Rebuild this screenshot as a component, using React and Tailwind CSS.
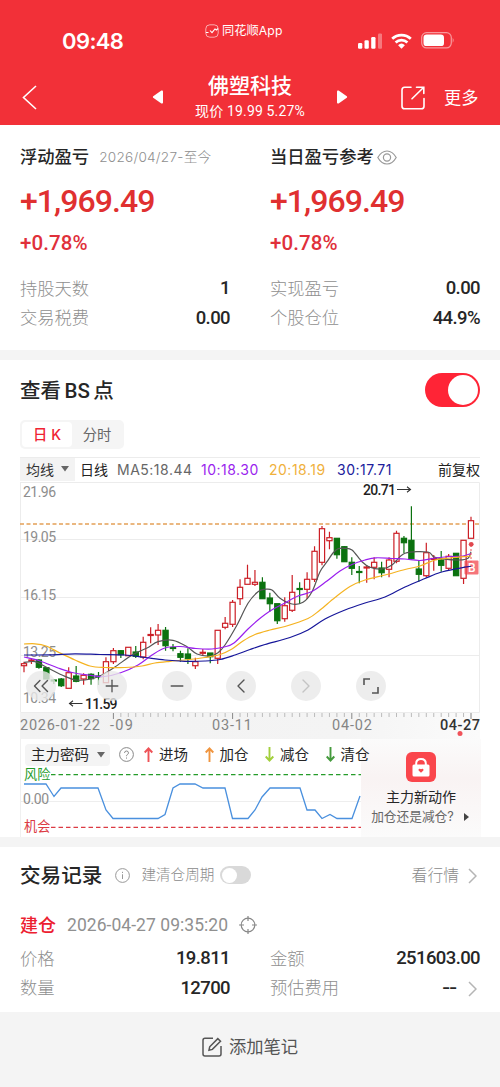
import React, { useState } from 'react';
import { ChevronLeft, ChevronRight, ChevronsLeft, Plus, Minus } from 'lucide-react';

// one entry per trading day: [high, bodyTop, bodyBottom, low, up]
const CANDLES = [
  [661.7, 663.7, 665.7, 672.3, 1], [658, 660, 661, 664, 1], [659.3, 660, 667.3, 668.7, 0],
  [667.7, 667.7, 679, 679, 0], [679, 680, 681, 684, 0], [678, 679, 685.7, 687, 0],
  [667.3, 672.7, 688.3, 688.3, 1], [666, 676, 681.3, 682.3, 0], [673.3, 675.3, 679, 684.7, 1],
  [673.3, 674.3, 678.7, 684.7, 0], [672, 676, 677, 685, 0], [657.3, 661.7, 682.7, 682.7, 1],
  [648, 650.7, 661.7, 664, 1], [650, 650.7, 654.7, 658, 0], [647.3, 647.3, 655.7, 655.7, 1],
  [646, 652, 656.3, 658, 0], [636.7, 642.3, 657, 659.3, 1], [627.3, 634.5, 635.5, 643.3, 1],
  [624, 630.3, 635, 645, 1], [627, 630.3, 645.7, 650.7, 0], [644, 647.5, 648.5, 651.3, 0],
  [650.7, 653.7, 657.3, 661.7, 0], [648.3, 654, 658.7, 664, 0], [657.7, 661.7, 665.7, 669, 1],
  [649, 652.3, 653.3, 655.7, 1], [653, 653, 656.7, 663.3, 0], [630.3, 630.3, 658.3, 664, 1],
  [617, 623.3, 627.3, 629.3, 1], [600, 602.3, 624.3, 627, 1], [579.3, 587.3, 598.7, 605, 1],
  [564.7, 578.3, 584.3, 584.3, 1], [570, 582.3, 584.3, 586, 1], [577.3, 582.3, 598.7, 599, 0],
  [592.7, 598, 603.7, 611.7, 0], [603.7, 603.7, 620.7, 624, 0], [597.3, 605.7, 618.7, 621.7, 1],
  [575, 592.3, 610.3, 612, 1], [582.3, 588.5, 589.5, 603.7, 0], [572.3, 579.3, 589.3, 599, 1],
  [546.3, 551.3, 579.3, 582, 1], [526, 528.7, 562.3, 565.3, 1], [531.7, 537.7, 540.7, 549.3, 1],
  [538, 538.3, 554.7, 558.7, 0], [546, 546.7, 561.7, 562, 0], [557.3, 562.3, 568.3, 575, 0],
  [566, 571.5, 572.5, 583.3, 0], [565, 567, 568, 582.7, 1], [557.3, 562.3, 567.3, 579.3, 1],
  [561.7, 568, 572.7, 577.3, 0], [557.3, 560, 569.3, 577.3, 1], [530.7, 533.3, 561.3, 563.3, 1],
  [536, 538.3, 542.7, 553.3, 0], [506.3, 540.3, 558.7, 559.7, 0], [560, 569, 574.3, 581.7, 0],
  [542.7, 552.7, 575.7, 577.3, 1], [555, 558.5, 559.5, 570.7, 1], [551, 560, 565.3, 571.7, 0],
  [554, 556.3, 568.3, 570, 1], [553, 553.3, 575.7, 576, 0], [540, 540.3, 578.3, 584, 1],
  [516.7, 520.7, 538.3, 538.3, 1],
];

const MA = [
  {
    color: '#555555',
    pts: [[24, 662.5], [35, 661.7], [46, 667], [62, 675], [76, 680], [91, 679], [102, 675], [115, 667], [132, 655], [147, 648], [158, 641.7], [173, 640.3], [187, 646.7], [197, 654], [210, 656], [218, 652.7], [225, 645], [237, 625], [248, 603.3], [258, 591.7], [265, 589.3], [272, 590], [280, 598.3], [292, 604], [303, 602.3], [312, 591.7], [320, 571.7], [327, 561.7], [333, 553], [338, 548.7], [345, 548.3], [352, 550], [362, 561.7], [370, 567.3], [382, 569], [392, 565], [405, 553.3], [428, 552], [435, 557.3], [458, 560], [468, 558.3], [471, 551.7]],
  },
  {
    color: '#9a1fee',
    pts: [[24, 657], [40, 661], [58, 668], [72, 672.5], [88, 675], [104, 676.5], [120, 673], [138, 665], [152, 655], [165, 648], [180, 646.5], [196, 648.5], [212, 649], [224, 647], [234, 643], [248, 629], [258, 620], [270, 611], [283, 604], [298, 596], [312, 591.5], [327, 581], [340, 571], [352, 564.5], [365, 560], [376, 557.8], [392, 558.5], [405, 559], [420, 560.5], [435, 558], [450, 556.5], [463, 556], [471, 553.5]],
  },
  {
    color: '#f5b321',
    pts: [[24, 644], [35, 643.8], [46, 646], [60, 653], [75, 660], [90, 666], [105, 667.5], [125, 667.5], [142, 666], [155, 663], [170, 661.3], [185, 660], [205, 657.5], [220, 654.5], [232, 649], [243, 641], [255, 634.5], [270, 630], [285, 626.5], [308, 618.5], [320, 610], [335, 597.5], [350, 586.5], [365, 580], [385, 575], [405, 569.5], [420, 566], [435, 560], [450, 558], [471, 556]],
  },
  {
    color: '#16169a',
    pts: [[24, 655], [50, 654.8], [75, 653.8], [100, 654.5], [125, 655], [145, 657.5], [165, 660], [185, 661.3], [205, 661], [220, 659.5], [235, 655], [250, 649.5], [265, 644.5], [290, 637.5], [308, 630], [325, 619], [345, 610], [365, 603], [385, 597], [405, 587], [425, 578.5], [440, 572.5], [455, 569], [471, 566.5]],
  },
];

const FORCE = '24,784 46,784 54,796.5 61,788 98,788 106,810 113,818.5 158,818.5 165,814.5 173,788 180,784 195,784 203,788 225,788 232.5,818.5 248,818.5 255,810 262,797 270,788 300,788 307,810 315,810 322,818.5 330,814.5 337,818.5 352,818.5 360,796';

const candleX = (i) => 24 + i * 7.45;

function smooth(pts) {
  let d = `M${pts[0][0]} ${pts[0][1]}`;
  for (let i = 0; i < pts.length - 1; i++) {
    const a = pts[i - 1] || pts[i], b = pts[i], c = pts[i + 1], e = pts[i + 2] || c;
    d += `C${b[0] + (c[0] - a[0]) / 6} ${b[1] + (c[1] - a[1]) / 6} ${c[0] - (e[0] - b[0]) / 6} ${c[1] - (e[1] - b[1]) / 6} ${c[0]} ${c[1]}`;
  }
  return d;
}

const numCls = "font-['Roboto','Noto_Sans_CJK_SC',sans-serif]";

function StatusBar() {
  return (
    <div className="flex h-[64px] items-start text-white">
      <div className="w-[184px] pt-[26px] pl-[62px] text-[22px] leading-[30px] font-semibold tracking-[-0.6px]">09:48</div>
      <div className="flex w-[122px] items-center gap-[3px] pt-[22px] pl-[21px] text-[12.2px] leading-[18px] tracking-[0.1px]">
        <svg width="14" height="14" viewBox="0 0 14 14" fill="none" stroke="white" strokeWidth="1">
          <rect x=".8" y=".8" width="12.4" height="12.4" rx="4" opacity=".6" />
          <path d="M1 8.5H3.5M5 6.5L7 8.7L10 5L11.5 6L13 4.5" strokeWidth="1.1" />
        </svg>
        <span className="whitespace-nowrap">同花顺App</span>
      </div>
      <div className="flex items-center gap-[9px] pt-[32px] pl-[52px]">
        <svg width="24" height="16" viewBox="0 0 24 16" fill="white">
          <rect x="0" y="10" width="4.3" height="5.7" rx="1.2" />
          <rect x="6.5" y="7.2" width="4.3" height="8.5" rx="1.2" />
          <rect x="13.2" y="4" width="4.3" height="11.7" rx="1.2" />
          <rect x="20" y=".5" width="4.2" height="15.2" rx="1.2" opacity=".35" />
        </svg>
        <svg width="21" height="16" viewBox="0 0 21 16" fill="none" stroke="white" strokeWidth="2.7">
          <path d="M1.2 5.8A13.4 13.4 0 0 1 19.8 5.8" />
          <path d="M4.6 9.4A8.6 8.6 0 0 1 16.4 9.4" />
          <path d="M7.1 12.2A5 5 0 0 1 13.9 12.2L10.5 15.7Z" fill="white" stroke="none" />
        </svg>
        <svg width="34" height="17" viewBox="0 0 34 17" fill="none">
          <rect x=".7" y=".7" width="29.6" height="15.2" rx="4.8" stroke="white" strokeOpacity=".5" strokeWidth="1.2" />
          <rect x="2.5" y="2.5" width="20.5" height="11.6" rx="3.2" fill="white" />
          <path d="M31.7 5.8Q33.6 8.3 31.7 10.8Z" fill="white" fillOpacity=".5" />
        </svg>
      </div>
    </div>
  );
}

function Header() {
  return (
    <header className="h-[125px] bg-[#f23038]">
      <StatusBar />
      <div className="flex h-[61px] items-center text-white">
        <svg className="mt-[5px] ml-[22px]" width="16" height="25" viewBox="0 0 16 25" fill="none" stroke="white" strokeWidth="1.6">
          <path d="M14 1L1.5 12.5L14 24" />
        </svg>
        <svg className="mt-[5px] ml-[114px]" width="12" height="14" viewBox="0 0 12 14" fill="white"><path d="M1.2 6.2L9.4 .6Q11 0 11 1.6V12.4Q11 14 9.4 13.4L1.2 7.8Q.4 7 1.2 6.2Z" /></svg>
        <div className="w-[172px] pt-[6px] text-center">
          <div className="text-[21px] leading-[26px] font-medium">佛塑科技</div>
          <div className={`pt-[1px] text-[14px] leading-[22px] tracking-[0.15px] ${numCls}`}>现价 19.99 5.27%</div>
        </div>
        <svg className="mt-[5px]" width="12" height="14" viewBox="0 0 12 14" fill="white"><path d="M10.8 6.2L2.6 .6Q1 0 1 1.6V12.4Q1 14 2.6 13.4L10.8 7.8Q11.6 7 10.8 6.2Z" /></svg>
        <svg className="mt-[6px] ml-[53px]" width="24" height="24" viewBox="0 0 24 24" fill="none" stroke="white" strokeWidth="1.6" strokeLinecap="round">
          <path d="M10 1.3H3.6Q1 1.3 1 4V20.2Q1 22.8 3.6 22.8H20.4Q23 22.8 23 20.2V12.5" />
          <path d="M11 12.8L22.5 1.5M15.5 1.3H22.8V7.5" />
        </svg>
        <div className="ml-[19px] pt-[7px] text-[17.2px]">更多</div>
      </div>
    </header>
  );
}

function Row({ label, value, children }) {
  return (
    <div className="flex h-[29.5px] w-[210px] items-center justify-between">
      <span className="text-[17.3px] text-[#8f8f8f] font-light">{label}</span>
      <span className={`flex items-center pt-[1px] text-[18.5px] font-medium tracking-[-0.6px] text-[#262626] ${numCls}`}>{value}{children}</span>
    </div>
  );
}

function ProfitColumn({ title, extra, rows }) {
  return (
    <div className="w-[210px]">
      <div className="flex h-[24px] items-center text-[17.3px] font-medium text-[#262626]">
        <span className="whitespace-nowrap">{title}</span>{extra}
      </div>
      <div className={`mt-[11px] h-[42px] text-[32px] leading-[42px] font-medium tracking-[-0.95px] text-[#e03030] ${numCls}`}>+1,969.49</div>
      <div className={`mt-[9px] mb-[19px] h-[24px] text-[20.5px] leading-[24px] font-medium tracking-[0.1px] text-[#e0303a] ${numCls}`}>+0.78%</div>
      {rows.map(([label, value]) => <Row key={label} label={label} value={value} />)}
    </div>
  );
}

function Profit() {
  return (
    <section className="flex h-[225px] justify-between bg-white px-5 pt-5">
      <ProfitColumn
        title="浮动盈亏"
        extra={<span className="ml-[10px] whitespace-nowrap text-[13.6px] font-light tracking-[0.25px] text-[#8f8f8f]">2026/04/27-至今</span>}
        rows={[['持股天数', '1'], ['交易税费', '0.00']]}
      />
      <ProfitColumn
        title="当日盈亏参考"
        extra={(
          <svg className="ml-[3px]" width="20" height="15" viewBox="0 0 20 15" fill="none" stroke="#999" strokeWidth="1.2">
            <path d="M.8 7.5Q4.5 1 10 1T19.2 7.5Q15.5 14 10 14T.8 7.5Z" />
            <circle cx="10" cy="7.5" r="3.6" />
          </svg>
        )}
        rows={[['实现盈亏', '0.00'], ['个股仓位', '44.9%']]}
      />
    </section>
  );
}

function KLine() {
  return (
    <svg className="block" width="465" height="257" viewBox="20 482 465 257" fontFamily="Roboto, sans-serif">
      <defs>
        <linearGradient id="axis" x1="0" x2="1">
          <stop offset="0" stopColor="#f2f2f2" />
          <stop offset=".7" stopColor="#f4f4f4" />
          <stop offset="1" stopColor="#fbfbfb" />
        </linearGradient>
      </defs>
      <rect x="20" y="713" width="460" height="26" fill="url(#axis)" />
      <path d="M20 482.5H479.5V712.5H20.5V482.5M20 539.5H480M20 597.5H480M20 655.5H480" fill="none" stroke="#ececec" />
      <path d="M20 524H480" stroke="#e3a057" strokeWidth="1.3" strokeDasharray="4 2.5" />
      <g fill="#8d8d8d" fontSize="14">
        <text x="23" y="496.5" textLength="33">21.96</text>
        <text x="23" y="542" textLength="33">19.05</text>
        <text x="23" y="599.5" textLength="33">16.15</text>
        <text x="23" y="657" textLength="33">13.25</text>
        <text x="23" y="703" textLength="33">10.34</text>
      </g>
      {CANDLES.map(([hi, top, bot, lo, up], i) => {
        const x = candleX(i);
        const color = up ? '#cc1f26' : '#0b720f';
        return (
          <g key={i} stroke={color} strokeWidth="1.2">
            <path d={`M${x} ${hi}V${top}M${x} ${bot}V${lo}`} />
            <rect x={x - 2.6} y={top} width="5.2" height={bot - top} fill={up ? 'white' : color} />
          </g>
        );
      })}
      {MA.map(({ color, pts }) => (
        <path key={color} d={smooth(pts)} fill="none" stroke={color} strokeWidth="1.2" />
      ))}
      <path d="M471 545V562" stroke="#e55" strokeDasharray="2 2" />
      <circle cx="471.2" cy="544.3" r="2.4" fill="#e0474e" />
      <rect x="464.5" y="560.5" width="14" height="14" rx="1" fill="#f2474d" fillOpacity=".75" />
      <text x="468" y="572" fontSize="12" fill="white" fontWeight="500">B</text>
      <path d="M464 567.2L471 566.3" stroke="#16169a" />
      <g fontSize="14" fontWeight="500" fill="#1f1f1f">
        <text x="363" y="494.5" textLength="33">20.71</text>
        <text x="85" y="708.5" textLength="32.5">11.59</text>
      </g>
      <path d="M397 489.5H410.5M407 486.8L410.5 489.5L407 492.2M82.5 703.5H69.5M73 700.8L69.5 703.5L73 706.2" fill="none" stroke="#333" strokeWidth="1.1" />
      {CANDLES.map((_, i) => {
        const major = [12, 28, 44, 60].includes(i);
        return i >= 12 && <path key={i} d={`M${candleX(i)} 713V${major ? 719 : 717}`} stroke={major ? '#888' : '#bbb'} />;
      })}
      <g fontSize="14.5" fill="#858585">
        <text x="20" y="730" textLength="80">2026-01-22</text>
        <text x="110" y="730" textLength="23">-09</text>
        <text x="212" y="730" textLength="40">03-11</text>
        <text x="332" y="730" textLength="40">04-02</text>
        <text x="440" y="730" textLength="40" fill="#333" fontWeight="500">04-27</text>
      </g>
      <circle cx="460" cy="733.5" r="2.5" fill="#f0525a" />
    </svg>
  );
}

function ChartControls() {
  const btn = 'flex h-[30px] w-[30px] items-center justify-center rounded-full bg-[#e9e9e9]/80 text-[#555]';
  return (
    <div className="absolute top-[189px] left-[6px] flex gap-[34.8px]">
      <button className={btn + ' mr-[6px]'}><ChevronsLeft size={26} strokeWidth={1.3} /></button>
      <button className={btn}><Plus size={20} strokeWidth={1.6} /></button>
      <button className={btn}><Minus size={20} strokeWidth={1.6} /></button>
      <button className={btn}><ChevronLeft size={24} strokeWidth={1.4} /></button>
      <button className={btn}><ChevronRight size={24} strokeWidth={1.4} className="text-[#c4c4c4]" /></button>
      <button className={btn}>
        <svg width="16" height="16" viewBox="0 0 16 16" fill="none" stroke="#555" strokeWidth="1.6"><path d="M1 7V1H7M9 15H15V9" /></svg>
      </button>
    </div>
  );
}

const SIGNALS = [
  { name: '进场', color: '#ee5257', up: true },
  { name: '加仓', color: '#f0953f', up: true },
  { name: '减仓', color: '#a2cf3c', up: false },
  { name: '清仓', color: '#459a3d', up: false },
];

function Indicator() {
  return (
    <div className="relative h-[98px] w-[460px] border-l border-[#f0f0f0]">
      <div className="relative z-10 flex h-[31px] w-[360px] items-center text-[14.5px] text-[#262626]">
        <div className="ml-[4px] flex h-[22px] w-[85px] shrink-0 items-center justify-between rounded-sm bg-[#f4f4f4] pr-[5px] pl-[6px]">
          <span className="whitespace-nowrap">主力密码</span>
          <svg width="8" height="6" viewBox="0 0 8 6" fill="#666"><path d="M0 0H8L4 5.5Z" /></svg>
        </div>
        <svg className="ml-[9px] shrink-0" width="15" height="15" viewBox="0 0 15 15" fill="none" stroke="#888" strokeWidth="1">
          <circle cx="7.5" cy="7.5" r="6.9" />
          <path d="M5.5 5.9Q5.6 4 7.5 4T9.5 5.9Q9.5 6.9 8.4 7.5Q7.5 8 7.5 9.2M7.5 10.5V11.6" />
        </svg>
        <div className="ml-[10px] flex gap-[16.5px]">
          {SIGNALS.map((s) => (
            <div key={s.name} className="flex items-center gap-[6px]">
              <svg width="9" height="15" viewBox="0 0 9 15" fill="none" stroke={s.color} strokeWidth="1.9">
                <path d={s.up ? 'M4.5 15V1.5M.7 5.5L4.5 1.5L8.3 5.5' : 'M4.5 0V13.5M.7 9.5L4.5 13.5L8.3 9.5'} />
              </svg>
              <span className="w-[29px] whitespace-nowrap leading-[22px]">{s.name}</span>
            </div>
          ))}
        </div>
      </div>
      <svg className="block" width="341" height="67" viewBox="21 770 341 67" overflow="visible" fontFamily="Roboto, 'Noto Sans CJK SC', sans-serif">
        <path d="M21 801.5H361" stroke="#eeeeee" />
        <path d="M51 774.7H361" stroke="#259c2a" strokeWidth="1.3" strokeDasharray="4.5 3" />
        <path d="M51 827.3H361" stroke="#dc3b43" strokeWidth="1.3" strokeDasharray="4.5 3" />
        <text x="24" y="778.5" fontSize="13.2" fill="#259c2a">风险</text>
        <text x="23" y="804" fontSize="14" fill="#8d8d8d" textLength="26">0.00</text>
        <text x="24" y="831" fontSize="13.2" fill="#dc3b43">机会</text>
        <polyline points={FORCE} fill="none" stroke="#4a90de" strokeWidth="1.3" />
      </svg>
      <div className="absolute top-0 left-[340px] flex h-[98px] w-[120px] flex-col items-center bg-linear-to-b from-[#fbfbfb] via-[#f9f3f3] via-40% to-[#fbfbfb]">
        <svg className="mt-[13px] block" width="30" height="30" viewBox="0 0 30 30">
          <rect width="30" height="30" rx="6" fill="#fa464c" />
          <path d="M10.2 14V11.5Q10.2 7 15 7T19.8 11.5V14" fill="none" stroke="white" strokeWidth="2" />
          <rect x="6.5" y="12.5" width="17" height="12" rx="1.5" fill="white" />
          <path d="M15 20.8L12.6 18.6Q12 17.2 13.3 16.7Q14.4 16.4 15 17.3Q15.6 16.4 16.7 16.7Q18 17.2 17.4 18.6Z" fill="#fa464c" />
        </svg>
        <div className="mt-[4px] text-[14px] leading-[22px] text-[#262626]">主力新动作</div>
        <div className="-ml-[2px] flex items-center gap-[10px] text-[12.7px] leading-[17px] text-[#666]">
          <span className="whitespace-nowrap">加仓还是减仓?</span>
          <svg width="5" height="8" viewBox="0 0 5 8" fill="#444"><path d="M0 0L5 4L0 8Z" /></svg>
        </div>
      </div>
    </div>
  );
}

function ChartSection() {
  const [showPoints, setShowPoints] = useState(true);
  return (
    <section className="h-[477px] bg-white px-5">
      <div className="flex h-[60px] items-center justify-between">
        <h2 className="pt-[2px] text-[20.5px] font-medium text-[#262626]">查看 <span className="-ml-[2px] font-['Roboto']">BS</span> <span className="-ml-[2px]">点</span></h2>
        <button onClick={() => setShowPoints(!showPoints)} className={`flex h-[34px] w-[55px] items-center rounded-full px-[2px] ${showPoints ? 'justify-end bg-[#ff2436]' : 'bg-[#dcdcdc]'}`}>
          <span className="h-[30px] w-[30px] rounded-full bg-white" />
        </button>
      </div>
      <div className="flex h-[29px] w-[104px] items-center rounded-[5px] bg-[#f5f5f5] p-[2px] text-[14.3px]">
        <div className="flex h-[25px] w-[50px] items-center justify-center rounded-[4px] bg-white font-medium text-[#f02433]">日 K</div>
        <div className="flex-1 text-center text-[#666]">分时</div>
      </div>
      <div className="mt-[8px] flex h-[25px] items-center whitespace-nowrap border-t border-[#ececec] pb-[2px] text-[14px] text-[#333]">
        <div className="flex h-[23px] w-[55px] items-center justify-between bg-[#f3f3f3] pr-[6px] pl-[6px]">
          均线
          <svg width="8" height="6" viewBox="0 0 8 6" fill="#666"><path d="M0 0H8L4 5.5Z" /></svg>
        </div>
        <span className="ml-[5px] w-[37px] text-[#222]">日线</span>
        <span className="w-[84px] tracking-[0.5px] text-[#666]">MA5:18.44</span>
        <span className="w-[68px] tracking-[0.5px] text-[#9a1fee]">10:18.30</span>
        <span className="w-[68px] tracking-[0.5px] text-[#f0b13c]">20:18.19</span>
        <span className="tracking-[0.5px] text-[#20209c]">30:17.71</span>
        <span className="ml-auto text-[#222]">前复权</span>
      </div>
      <div className="relative">
        <KLine />
        <ChartControls />
      </div>
      <Indicator />
    </section>
  );
}

function Chevron() {
  return (
    <svg width="9" height="16" viewBox="0 0 9 16" fill="none" stroke="#b5b5b5" strokeWidth="1.5"><path d="M1 1L8 8L1 15" /></svg>
  );
}

function Records() {
  return (
    <section className="h-[165px] bg-white px-5 pt-[13px]">
      <div className="flex h-[30px] items-center">
        <h2 className="pt-[2px] text-[20.6px] font-medium text-[#262626]">交易记录</h2>
        <svg className="ml-[13px]" width="15" height="15" viewBox="0 0 15 15" fill="none" stroke="#999" strokeWidth="1">
          <circle cx="7.5" cy="7.5" r="6.9" /><path d="M7.5 3.8V5M7.5 6.3V11" />
        </svg>
        <span className="ml-[11px] w-[73px] pt-[1px] text-[14.6px] font-light whitespace-nowrap text-[#8a8a8a]">建清仓周期</span>
        <div className="ml-[6px] flex h-[18px] w-[31px] items-center rounded-full bg-[#d9d9d9] px-[1.5px]">
          <span className="h-[15px] w-[15px] rounded-full bg-white" />
        </div>
        <div className="ml-auto flex items-center gap-[9px] pt-[1px] pr-[3px] text-[15.8px] font-light text-[#8a8a8a]">看行情 <Chevron /></div>
      </div>
      <div className="mt-[20px] flex h-[30px] items-center">
        <span className="text-[18px] font-medium text-[#ec2030]">建仓</span>
        <span className={`ml-[11px] w-[161px] text-[17.5px] tracking-[0.05px] whitespace-nowrap text-[#909090] ${numCls}`}>2026-04-27 09:35:20</span>
        <svg className="ml-[11px]" width="18" height="18" viewBox="0 0 18 18" fill="none" stroke="#888" strokeWidth="1.2">
          <circle cx="9" cy="9" r="6.8" /><path d="M9 0V5M9 13V18M0 9H5M13 9H18" />
        </svg>
      </div>
      <div className="mt-[4px] grid grid-cols-2 gap-x-10">
        <Row label="价格" value="19.811" />
        <Row label="金额" value="251603.00" />
        <Row label="数量" value="12700" />
        <Row label="预估费用" value={<span className="mr-[12px] inline-block origin-right scale-x-125">--</span>}>
          <span className="pr-[3px]"><Chevron /></span>
        </Row>
      </div>
    </section>
  );
}

export default function App() {
  return (
    <div className="h-[1087px] w-[500px] overflow-hidden bg-[#f4f4f4] font-['Inter','Noto_Sans_CJK_SC',sans-serif]">
      <Header />
      <Profit />
      <div className="h-[10px]" />
      <ChartSection />
      <div className="h-[10px]" />
      <Records />
      <footer className="flex h-[70px] items-center justify-center gap-[7px] text-[17.3px] text-[#555]">
        <svg width="20" height="20" viewBox="0 0 20 20" fill="none" stroke="#555" strokeWidth="1.5">
          <path d="M11 1.2H3Q1 1.2 1 3.2V17Q1 19 3 19H17Q19 19 19 17V9" />
          <path d="M7 13.2L7.7 9.8L15.8 1.6L18.5 4.2L10.4 12.4Z" />
        </svg>
        添加笔记
      </footer>
    </div>
  );
}
